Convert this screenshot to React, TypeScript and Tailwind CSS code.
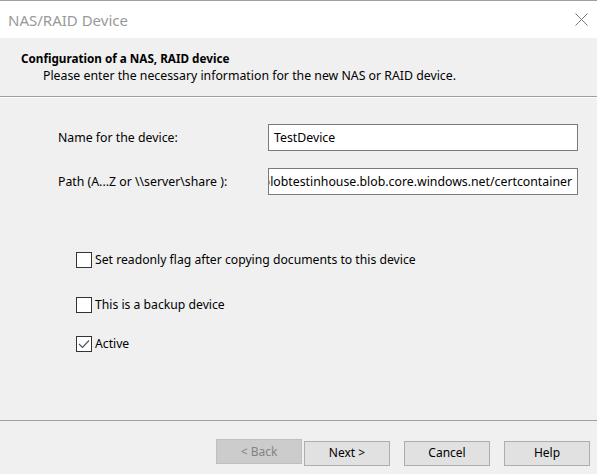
import React from "react";

const font = { fontFamily: '"Noto Sans", "Liberation Sans", Arial, sans-serif' };

function Checkbox({ label, checked }: { label: string; checked?: boolean }) {
  return (
    <label className="flex h-[16px] items-center gap-[3px] text-[12.2px] leading-[16px] text-black">
      <span className="flex h-[16px] w-[16px] items-center justify-center border border-[#333333] bg-white">
        {checked && (
          <svg width="12" height="10" viewBox="0 0 12 10" fill="none">
            <path d="M1 5 L4.5 8.5 L11 1.5" stroke="#555555" strokeWidth="1.2" />
          </svg>
        )}
      </span>
      <span>{label}</span>
    </label>
  );
}

function Button({ children, disabled }: { children: React.ReactNode; disabled?: boolean }) {
  return (
    <button
      className={
        disabled
          ? "h-[25px] w-[86px] border border-[#bfbfbf] bg-[#cccccc] text-[12px] leading-[16px] text-[#838383]"
          : "h-[25px] w-[86px] border border-[#adadad] bg-[#e1e1e1] text-[12px] leading-[16px] text-black"
      }
    >
      {children}
    </button>
  );
}

export default function App() {
  return (
    <div className="flex h-[474px] w-[597px] flex-col overflow-hidden bg-[#f0f0f0]" style={font}>
      {/* title bar */}
      <div className="flex h-[38px] items-center justify-between border-t border-[#a0a0a0] bg-white pl-[8px] pr-[9px]">
        <span className="text-[15px] leading-[20px] text-[#999999]">NAS/RAID Device</span>
        <svg width="13" height="13" viewBox="0 0 13 13">
          <path d="M0.5 0.5 L12.5 12.5 M12.5 0.5 L0.5 12.5" stroke="#777777" strokeWidth="1" />
        </svg>
      </div>

      {/* header */}
      <div className="flex h-[58px] flex-col justify-center pl-[21px] text-black">
        <div className="text-[11.7px] font-bold leading-[17px]">Configuration of a NAS, RAID device</div>
        <div className="pl-[22px] text-[12.3px] leading-[17px]">
          Please enter the necessary information for the new NAS or RAID device.
        </div>
      </div>
      <div className="border-t border-[#a0a0a0] border-b border-b-white" />

      {/* form */}
      <div className="flex flex-1 flex-col pt-[26px] text-[12.3px] leading-[16px] text-black">
        <div className="flex items-center pl-[58px]">
          <span className="w-[210px]">Name for the device:</span>
          <div className="flex h-[27px] w-[310px] items-center border border-[#7a7a7a] bg-white px-[5px]">
            TestDevice
          </div>
        </div>
        <div className="mt-[17px] flex items-center pl-[58px]">
          <span className="w-[210px]">Path (A...Z or \\server\share ):</span>
          <div className="flex h-[27px] w-[310px] items-center justify-end overflow-hidden whitespace-nowrap border border-[#7a7a7a] bg-white px-[5px]">
            https://blobtestinhouse.blob.core.windows.net/certcontainer
          </div>
        </div>

        <div className="mt-[57px] flex flex-col pl-[76px]">
          <Checkbox label="Set readonly flag after copying documents to this device" />
          <div className="mt-[29px]">
            <Checkbox label="This is a backup device" />
          </div>
          <div className="mt-[23px]">
            <Checkbox label="Active" checked />
          </div>
        </div>
      </div>

      {/* footer */}
      <div className="border-t border-[#a0a0a0]" />
      <div className="flex h-[53px] items-start justify-end pr-[7px] pt-[18px]">
        <Button disabled>&lt; Back</Button>
        <div className="ml-[2px]">
          <Button>Next &gt;</Button>
        </div>
        <div className="ml-[14px]">
          <Button>Cancel</Button>
        </div>
        <div className="ml-[14px]">
          <Button>Help</Button>
        </div>
      </div>
    </div>
  );
}
